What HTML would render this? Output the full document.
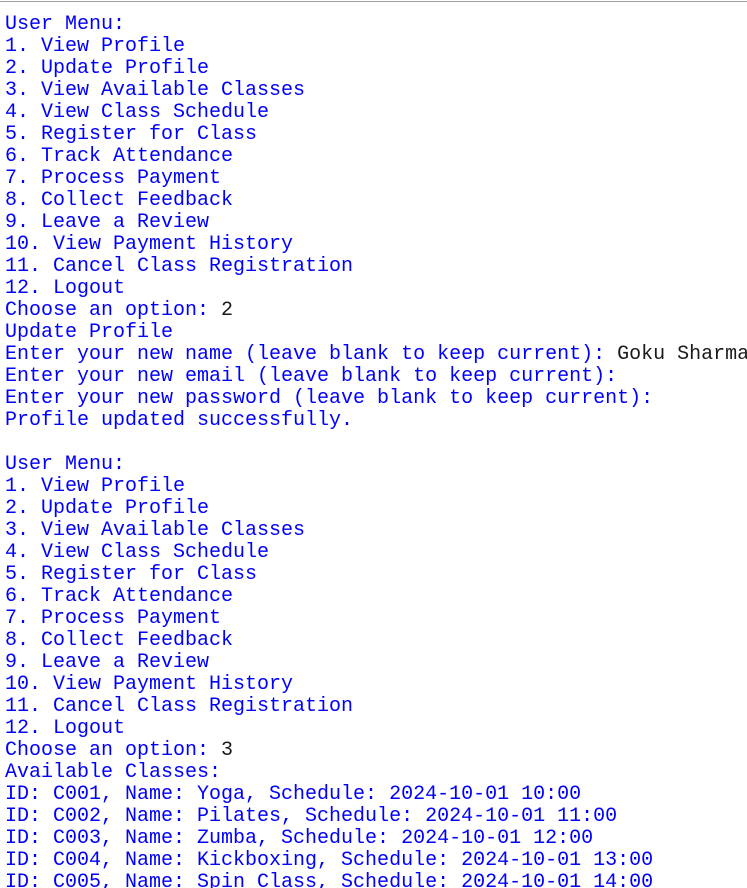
<!DOCTYPE html>
<html><head><style>
html,body{margin:0;padding:0;background:#fff;width:747px;height:888px;overflow:hidden}
.b{border-top:1px solid #a0a0a0;margin-top:1px}
pre{margin:0;padding:12px 0 0 5px;font-family:"Liberation Mono",monospace;font-size:20px;line-height:22px;color:#0000ff;white-space:pre}
i{font-style:normal;color:#1a1a1a}
</style></head><body><div class="b"></div><pre>User Menu:
1. View Profile
2. Update Profile
3. View Available Classes
4. View Class Schedule
5. Register for Class
6. Track Attendance
7. Process Payment
8. Collect Feedback
9. Leave a Review
10. View Payment History
11. Cancel Class Registration
12. Logout
Choose an option: <i>2</i>
Update Profile
Enter your new name (leave blank to keep current): <i>Goku Sharma</i>
Enter your new email (leave blank to keep current):
Enter your new password (leave blank to keep current):
Profile updated successfully.

User Menu:
1. View Profile
2. Update Profile
3. View Available Classes
4. View Class Schedule
5. Register for Class
6. Track Attendance
7. Process Payment
8. Collect Feedback
9. Leave a Review
10. View Payment History
11. Cancel Class Registration
12. Logout
Choose an option: <i>3</i>
Available Classes:
ID: C001, Name: Yoga, Schedule: 2024-10-01 10:00
ID: C002, Name: Pilates, Schedule: 2024-10-01 11:00
ID: C003, Name: Zumba, Schedule: 2024-10-01 12:00
ID: C004, Name: Kickboxing, Schedule: 2024-10-01 13:00
ID: C005, Name: Spin Class, Schedule: 2024-10-01 14:00</pre></body></html>
